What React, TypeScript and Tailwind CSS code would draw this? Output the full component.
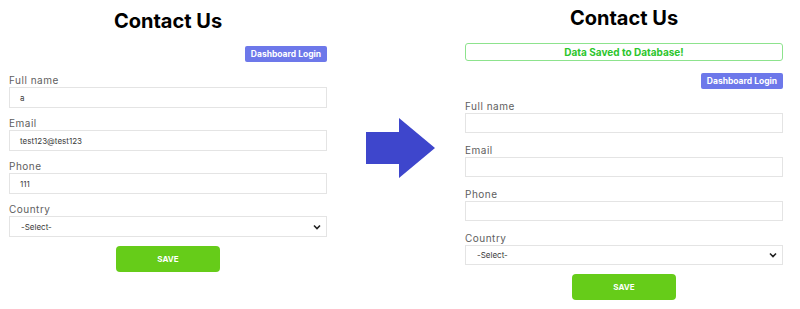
import React from "react";

const font = { fontFamily: "Inter, 'Open Sans', sans-serif" };

function Chevron() {
  return (
    <svg width="8" height="6" viewBox="0 0 8 6" className="absolute right-[5px] top-1/2 -translate-y-1/2">
      <path d="M1 1.5 L4 4.5 L7 1.5" stroke="#222" strokeWidth="1.6" fill="none" />
    </svg>
  );
}

function Field({ label, value, select, inputH, gap }: { label: string; value?: string; select?: boolean; inputH: string; gap: string }) {
  return (
    <div className={gap}>
      <div className="h-[14px] text-[10px] leading-[14px] tracking-[0.5px] text-[#5e5e5e]">{label}</div>
      <div className={`relative ${inputH} border border-[#e4e4e4] bg-white flex items-center pl-[10px] text-[8px] text-[#3a3a3a]`}>
        {select ? <span className="pl-[1px]">-Select-</span> : <span>{value}</span>}
        {select && <Chevron />}
      </div>
    </div>
  );
}

function Panel({ filled }: { filled: boolean }) {
  const inputH = filled ? "h-[21px]" : "h-[20px]";
  const gap = filled ? "mb-[8px]" : "mb-[10px]";
  return (
    <div className="w-[336px] px-[9px] flex flex-col">
      <div className={`${filled ? "mt-[7px]" : "mt-[4px]"} h-[28px] text-center text-[20px] font-bold leading-[28px] text-black`}>
        Contact Us
      </div>
      {!filled && (
        <div className="mt-[11px] h-[18px] rounded-[3px] border border-[#8de38d] flex items-center justify-center text-[10px] font-bold text-[#2cc52c]">
          Data Saved to Database!
        </div>
      )}
      <div className={`flex justify-end ${filled ? "mt-[11px]" : "mt-[12px]"}`}>
        <div className="h-[16px] w-[82px] rounded-[2px] bg-[#6d78ea] text-white text-[8.5px] font-bold flex items-center justify-center">
          Dashboard Login
        </div>
      </div>
      <div className={filled ? "mt-[11px]" : "mt-[10px]"}>
        <Field label="Full name" value={filled ? "a" : ""} inputH={inputH} gap={gap} />
        <Field label="Email" value={filled ? "test123@test123" : ""} inputH={inputH} gap={gap} />
        <Field label="Phone" value={filled ? "111" : ""} inputH={inputH} gap={gap} />
        <Field label="Country" select inputH={inputH} gap="mb-0" />
      </div>
      <div className="mt-[9px] flex justify-center">
        <div className="h-[26px] w-[104px] rounded-[4px] bg-[#66cc19] text-white text-[8px] font-bold flex items-center justify-center">
          SAVE
        </div>
      </div>
    </div>
  );
}

export default function App() {
  return (
    <div className="w-[800px] h-[309px] bg-white flex overflow-hidden" style={font}>
      <Panel filled />
      <div className="w-[120px] flex items-start justify-center pt-[118px]">
        <svg width="70" height="60" viewBox="0 0 70 60" className="ml-[10px]">
          <path d="M0 14 H33 V0 L69 30 L33 60 V46 H0 Z" fill="#3e46cc" />
        </svg>
      </div>
      <Panel filled={false} />
    </div>
  );
}
